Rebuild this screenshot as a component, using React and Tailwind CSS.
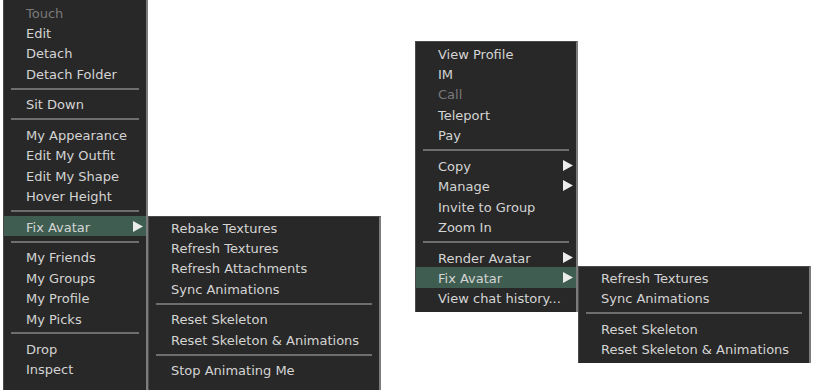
import React from "react";

const Arrow = () => (
  <svg width="10" height="11" viewBox="0 0 10 11" className="shrink-0">
    <polygon points="0,0 10,5.5 0,11" fill="#ececec" />
  </svg>
);

const Row = ({ item }) => {
  if (item === "sep") {
    return (
      <div className="h-[10.2px] flex items-center px-[7px]">
        <div className="h-[2px] w-full bg-[#6e6e6e]" />
      </div>
    );
  }
  const { label, disabled, arrow, active } = item;
  return (
    <div
      className={
        "h-[20.4px] flex items-center justify-between pl-[22px] pr-[3px] whitespace-nowrap " +
        (active ? "bg-[#3f5e51] " : "") +
        (disabled ? "text-[#7a7a7a]" : "text-[#d4d4d4]")
      }
    >
      <span className="pt-[2px]">{label}</span>
      {arrow ? <Arrow /> : null}
    </div>
  );
};

const Menu = ({ items, className }) => (
  <div
    className={
      "absolute flex flex-col bg-[#282828] border-l border-t border-[#4a4a4a] border-r-2 border-r-[#7c7c7c] overflow-hidden " +
      className
    }
  >
    {items.map((it, i) => (
      <Row key={i} item={it} />
    ))}
  </div>
);

const t = (label, extra = {}) => ({ label, ...extra });

const leftItems = [
  t("Touch", { disabled: true }),
  t("Edit"),
  t("Detach"),
  t("Detach Folder"),
  "sep",
  t("Sit Down"),
  "sep",
  t("My Appearance"),
  t("Edit My Outfit"),
  t("Edit My Shape"),
  t("Hover Height"),
  "sep",
  t("Fix Avatar", { arrow: true, active: true }),
  "sep",
  t("My Friends"),
  t("My Groups"),
  t("My Profile"),
  t("My Picks"),
  "sep",
  t("Drop"),
  t("Inspect"),
];

const sub1Items = [
  t("Rebake Textures"),
  t("Refresh Textures"),
  t("Refresh Attachments"),
  t("Sync Animations"),
  "sep",
  t("Reset Skeleton"),
  t("Reset Skeleton & Animations"),
  "sep",
  t("Stop Animating Me"),
];

const rightItems = [
  t("View Profile"),
  t("IM"),
  t("Call", { disabled: true }),
  t("Teleport"),
  t("Pay"),
  "sep",
  t("Copy", { arrow: true }),
  t("Manage", { arrow: true }),
  t("Invite to Group"),
  t("Zoom In"),
  "sep",
  t("Render Avatar", { arrow: true }),
  t("Fix Avatar", { arrow: true, active: true }),
  t("View chat history..."),
];

const sub2Items = [
  t("Refresh Textures"),
  t("Sync Animations"),
  "sep",
  t("Reset Skeleton"),
  t("Reset Skeleton & Animations"),
];

export default function App() {
  return (
    <div
      className="relative w-[819px] h-[390px] bg-white overflow-hidden text-[13px] leading-none"
      style={{ fontFamily: '"DejaVu Sans", "Liberation Sans", sans-serif' }}
    >
      <Menu items={leftItems} className="left-[3px] top-[-1px] w-[145px] h-[394px] pt-[2px]" />
      <Menu items={sub1Items} className="left-[148px] top-[216px] w-[233px] h-[180px]" />
      <Menu items={rightItems} className="left-[415px] top-[41px] w-[163px] pt-[1px] pb-[4px]" />
      <Menu items={sub2Items} className="left-[578px] top-[266px] w-[233px] pb-[4px]" />
    </div>
  );
}
